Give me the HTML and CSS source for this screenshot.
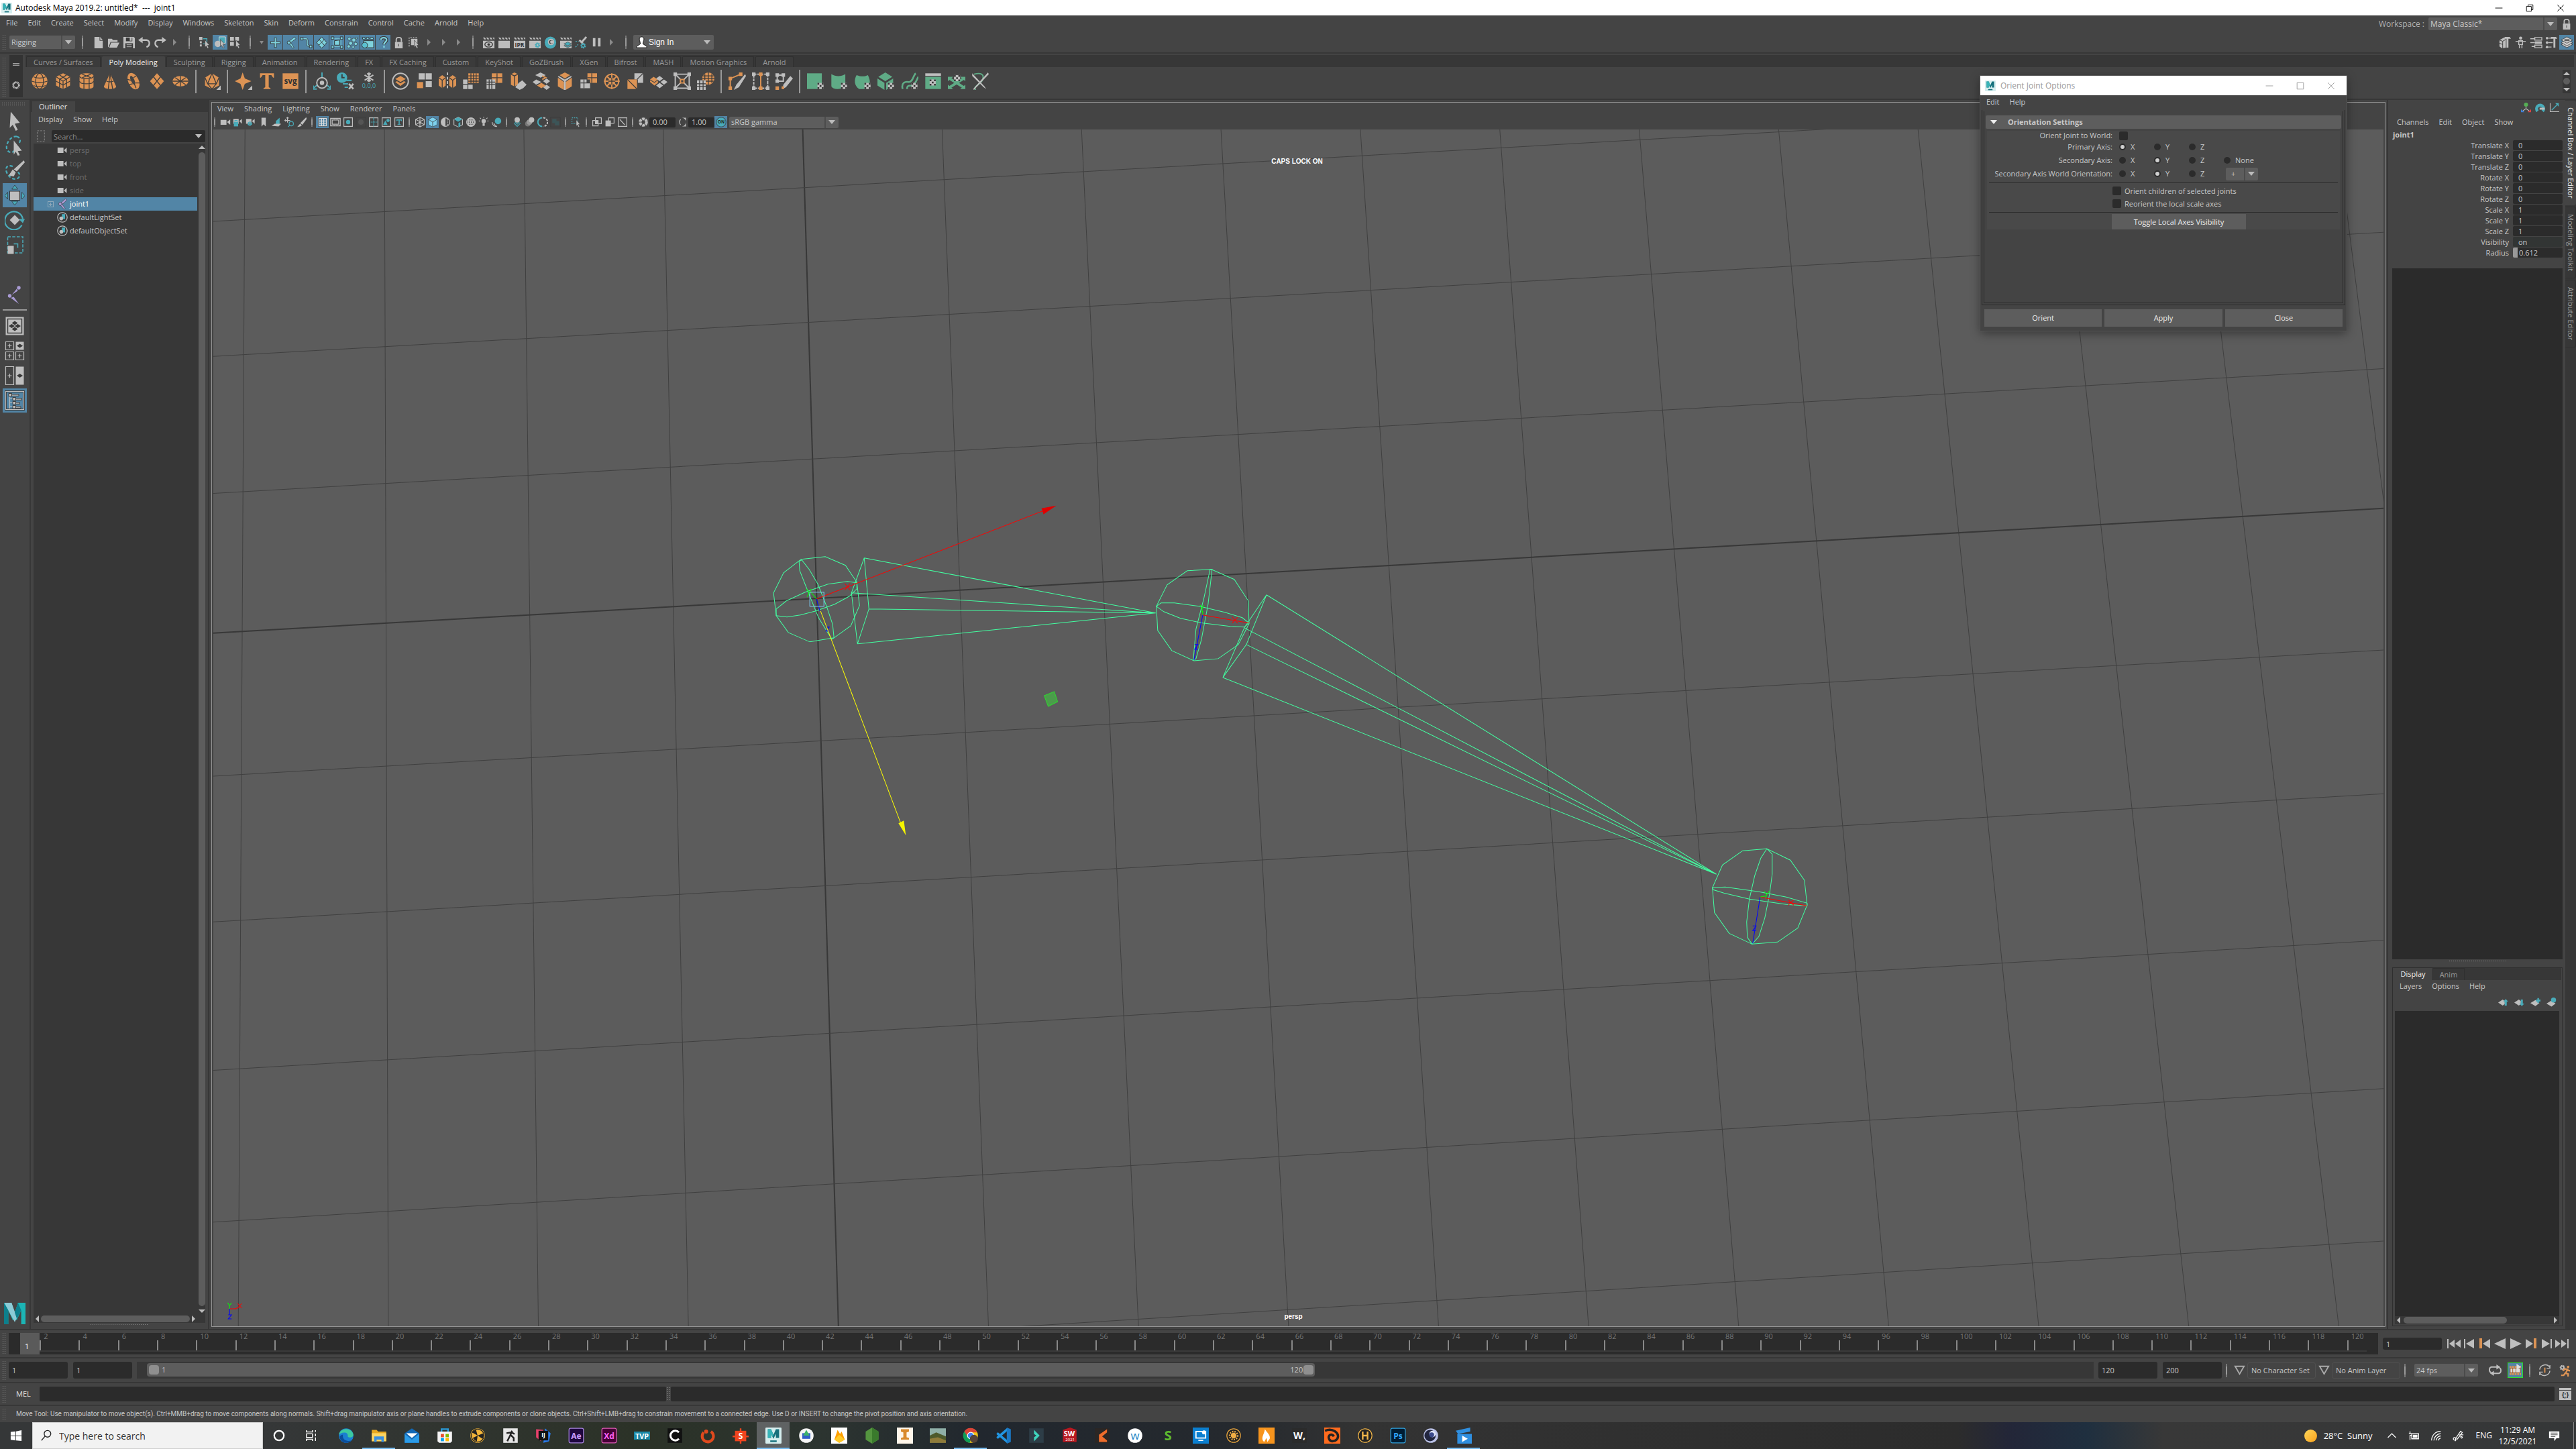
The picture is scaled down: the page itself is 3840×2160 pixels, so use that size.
FILE: index.html
```html
<!DOCTYPE html>
<html lang="en">
<head>
    <meta charset="UTF-8">
    <meta name="viewport" content="width=device-width, initial-scale=1.0">
    <title>Autodesk Maya 2019.2: untitled*</title>
    <link rel="stylesheet" href="styles.css">
</head>
<body>
    <header class="titlebar">
        <span class="app-icon" data-icon="maya"></span>
        <span class="title-text">Autodesk Maya 2019.2: untitled*&nbsp; ---&nbsp; joint1</span>
        <div class="win-buttons" data-tools="min restore close"></div>
    </header>

    <div class="menubar">
        <nav class="menu">
            <a href="#">File</a><a href="#">Edit</a><a href="#">Create</a><a href="#">Select</a><a href="#">Modify</a><a href="#">Display</a><a href="#">Windows</a><a href="#">Skeleton</a><a href="#">Skin</a><a href="#">Deform</a><a href="#">Constrain</a><a href="#">Control</a><a href="#">Cache</a><a href="#">Arnold</a><a href="#">Help</a>
        </nav>
        <label class="workspace-label" for="workspace">Workspace :</label>
        <div class="combo workspace"><select id="workspace"><option>Maya Classic*</option></select></div>
        <button class="lock-button" data-icon="lock" aria-label="Lock workspace"></button>
    </div>

    <div class="statusline">
        <span class="grip"></span>
        <div class="combo menuset"><select aria-label="Menu set"><option>Rigging</option></select></div>
        <div class="tools" data-tools="| file open save undo redo > | selHier selObj* selComp | v plus* joint* curve* surf* deform* dyn* render* help* lock selHi > > > | clapEye clap ipr clapGear ring clapLayers lightGear pause > |"></div>
        <div class="combo signin">
            <span data-icon="person"></span>
            <select aria-label="Account"><option>Sign In</option></select>
        </div>
        <div class="tools right-tools" data-tools="modelKit human attrEd toolSet chanBox*"></div>
    </div>

    <div class="shelf">
        <span class="grip"></span>
        <div class="shelf-side"><i class="bars"></i><span data-icon="gear"></span></div>
        <div class="shelf-body">
            <div class="shelf-tabs">
                <button>Curves / Surfaces</button><button class="active">Poly Modeling</button><button>Sculpting</button><button>Rigging</button><button>Animation</button><button>Rendering</button><button>FX</button><button>FX Caching</button><button>Custom</button><button>KeyShot</button><button>GoZBrush</button><button>XGen</button><button>Bifrost</button><button>MASH</button><button>Motion Graphics</button><button>Arnold</button>
            </div>
            <div class="shelf-row">
                <div class="shelf-tools" data-tools="sphere cube cylinder cone torus plane disc | platonic | star type svgIcon | pivot history freeze | combine separate mirror smooth reduce remesh boolean bevelA bevelB bridge wheel fill multi target | penCut loopCut quad | uvPlane uvCyl uvSph uvCube uvCam uvEd unfold sew"></div>
                <div class="shelf-scroll"><i class="tri up"></i><i class="dot"></i><i class="tri down"></i></div>
            </div>
        </div>
    </div>

    <main class="workarea">
        <aside class="toolbox">
            <span class="grip flat"></span>
            <div class="tool-stack" data-tools="arrow lasso paint move* rotate scale"></div>
            <div class="tool-stack last-tool" data-tools="jointTool"></div>
            <hr>
            <div class="tool-stack" data-tools="laySingle layFour layTwo layOut*"></div>
            <span class="maya-logo" data-icon="mayaBig"></span>
        </aside>

        <section class="outliner">
            <div class="panel-tab">Outliner</div>
            <nav class="menu"><a href="#">Display</a><a href="#">Show</a><a href="#">Help</a></nav>
            <div class="search-row">
                <span data-icon="frame"></span>
                <div class="combo search"><input type="text" placeholder="Search..." aria-label="Search outliner"></div>
            </div>
            <div class="tree-wrap">
                <ul class="tree">
                    <li class="dim"><span data-icon="cam"></span>persp</li>
                    <li class="dim"><span data-icon="cam"></span>top</li>
                    <li class="dim"><span data-icon="cam"></span>front</li>
                    <li class="dim"><span data-icon="cam"></span>side</li>
                    <li class="selected"><i class="expand"></i><span data-icon="jointItem"></span>joint1</li>
                    <li><span data-icon="set"></span>defaultLightSet</li>
                    <li><span data-icon="set"></span>defaultObjectSet</li>
                </ul>
                <div class="vscroll"><i class="tri up"></i><i class="thumb"></i><i class="tri down"></i></div>
            </div>
            <div class="hscroll"><i class="tri left"></i><i class="thumb"></i><i class="tri right"></i></div>
            <span class="dots"></span>
        </section>

        <section class="view-panel">
            <nav class="menu"><a href="#">View</a><a href="#">Shading</a><a href="#">Lighting</a><a href="#">Show</a><a href="#">Renderer</a><a href="#">Panels</a></nav>
            <div class="view-tools">
                <div class="tools" data-tools="| vcam camLock camGear bookmark imgPlane panZoom pencil | grid* film gate mask fieldChart safeA safeT | wire shaded* halfShade texCube checker bulb shadow | ao blur half greyBox | isoSel | xray1 xray2 xray3 | aperture"></div>
                <input type="text" value="0.00" aria-label="Exposure">
                <div class="tools" data-tools="gamma"></div>
                <input type="text" value="1.00" aria-label="Gamma">
                <div class="tools" data-tools="on*"></div>
                <div class="combo colorspace"><select aria-label="View transform"><option>sRGB gamma</option></select></div>
            </div>
            <div class="viewport">
                <svg id="scene" viewBox="318 193 3235 1782" preserveAspectRatio="xMidYMid slice">
                    <g id="grid"></g>
                    <g class="bone">
                        <path d="M1195 833L1231 829L1261 842L1278 867L1282 902L1269 932L1244 950L1208 956L1176 942L1158 917L1154 883L1169 853Z"/>
                        <path d="M1158 907L1173 895L1201 882L1235 870L1264 866L1278 868L1278 877L1267 888L1245 900L1217 910L1194 916L1174 919L1158 917Z"/>
                        <path d="M1192 836L1193 850L1206 883L1221 920L1235 943L1241 952L1244 950L1242 930L1233 903L1220 870L1207 848L1196 834Z"/>
                        <path d="M1289 831L1296 907L1279 959L1270 883ZM1289 831L1723 913L1296 907M1279 959L1723 913L1270 883"/>
                        <path d="M1770 850L1806 848L1840 863L1861 895L1862 929L1846 960L1816 981L1780 984L1747 969L1726 939L1724 903L1740 871Z"/>
                        <path d="M1724 903L1731 898L1751 898L1788 903L1826 912L1852 920L1862 928L1855 934L1834 933L1793 928L1760 921L1735 911Z"/>
                        <path d="M1804 848L1795 890L1783 937L1779 983L1783 981L1791 953L1801 900L1807 848Z"/>
                        <path d="M1888 886L1858 960L1823 1009L1855 935ZM1888 886L2558 1302L1858 960M1823 1009L2558 1302L1855 935"/>
                        <path d="M2597 1267L2633 1264L2668 1281L2689 1311L2693 1348L2679 1382L2649 1403L2611 1406L2577 1390L2555 1359L2552 1322L2567 1288Z"/>
                        <path d="M2552 1322L2571 1321L2621 1328L2662 1336L2693 1345L2693 1349L2662 1347L2607 1339L2569 1330L2553 1325Z"/>
                        <path d="M2633 1264L2624 1278L2615 1304L2607 1339L2603 1373L2604 1396L2611 1406L2621 1395L2630 1367L2637 1332L2641 1302L2641 1272Z"/>
                    </g>
                    <g class="axis-x">
                        <path d="M1218 892L1555 761M1260 869l8 10m0-10l-8 10M1793 916L1862 928M1837 919l8 9m0-9l-8 9M2623 1336L2693 1349M2665 1340l8 8m0-8l-8 8M344 1949h9l6-3M356 1941l6 7m0-7l-6 7"/>
                        <path class="head-x" d="M1553 757L1575 753L1556 766Z"/>
                    </g>
                    <path class="axis-y" d="M1218 892L1208 880M1203 877l4 6l3-6m-3 6l-3 6M1793 916v-6M1789 901l3 6l3-6m-3 6v5M2623 1336l10-2M2629 1327l4 5l4-5m-4 5l-2 6M344 1949v-6M341 1940l3 4l3-4"/>
                    <path class="axis-z" d="M1218 892L1223 910M1232 934h5l-5 6h5M1793 916L1780 983M1781 960h5l-5 7h5M2623 1336L2612 1405M2612 1379h5l-5 7h5M344 1949v9M342 1958h5l-5 6h5"/>
                    <path class="axis-sel" d="M1224 910L1343 1225"/>
                    <path class="head-sel" d="M1340 1226L1348 1222L1351 1244Z"/>
                    <path class="plane-handle" d="M1572 1030L1557 1036L1563 1052L1577 1045Z"/>
                    <rect class="center-handle" x="1208" y="882" width="21" height="21"/>
                </svg>
                <span class="hud hud-top">CAPS LOCK ON</span>
                <span class="hud hud-bottom">persp</span>
            </div>
        </section>

        <section class="channelbox">
            <div class="tools chan-icons" data-tools="manip speed hyper"></div>
            <nav class="menu"><a href="#">Channels</a><a href="#">Edit</a><a href="#">Object</a><a href="#">Show</a></nav>
            <h2>joint1</h2>
            <div id="channels"></div>
            <div class="history"></div>
            <span class="dots"></span>
            <div class="layers">
                <div class="layer-tabs"><button class="active">Display</button><button>Anim</button></div>
                <nav class="menu"><a href="#">Layers</a><a href="#">Options</a><a href="#">Help</a></nav>
                <div class="tools layer-icons" data-tools="layUp layDown layAdd laySel"></div>
                <div class="layer-list"></div>
                <div class="hscroll"><i class="tri left"></i><i class="thumb"></i><i class="tri right"></i></div>
            </div>
        </section>

        <div class="side-tabs">
            <button class="active">Channel Box / Layer Editor</button>
            <button>Modeling Toolkit</button>
            <button>Attribute Editor</button>
        </div>
    </main>

    <div class="timeline">
        <span class="grip"></span>
        <div class="track" id="track"></div>
        <input type="text" class="field" value="1" aria-label="Current frame">
        <div class="tools" data-tools="toStart stepBack keyBack playBack play keyFwd stepFwd toEnd"></div>
    </div>

    <div class="range">
        <span class="grip"></span>
        <input type="text" class="field" value="1" aria-label="Animation start">
        <input type="text" class="field" value="1" aria-label="Playback start">
        <div class="range-track">
            <div class="range-thumb"><i></i><span>1</span><span class="range-end">120</span><i></i></div>
        </div>
        <input type="text" class="field" value="120" aria-label="Playback end">
        <input type="text" class="field" value="200" aria-label="Animation end">
        <i class="sep"></i>
        <button class="outline-tri" data-icon="triOut" aria-label="Character sets"></button>
        <button class="set-button">No Character Set</button>
        <button class="outline-tri" data-icon="triOut" aria-label="Anim layers"></button>
        <button class="set-button">No Anim Layer</button>
        <i class="sep"></i>
        <div class="combo fps"><select aria-label="Frame rate"><option>24 fps</option></select></div>
        <div class="tools" data-tools="loop cache* | autoKey prefs"></div>
    </div>

    <div class="command">
        <span class="grip"></span>
        <label for="mel">MEL</label>
        <input type="text" id="mel">
        <span class="grip"></span>
        <input type="text" class="result" aria-label="Result" readonly>
        <button data-icon="script" aria-label="Script editor"></button>
    </div>

    <div class="helpline">
        <span class="grip"></span>
        <p>Move Tool: Use manipulator to move object(s). Ctrl+MMB+drag to move components along normals. Shift+drag manipulator axis or plane handles to extrude components or clone objects. Ctrl+Shift+LMB+drag to constrain movement to a connected edge. Use D or INSERT to change the pivot position and axis orientation.</p>
    </div>

    <footer class="taskbar">
        <button class="start" data-icon="windows" aria-label="Start"></button>
        <div class="task-search"><span data-icon="magnifier"></span><input type="text" placeholder="Type here to search" aria-label="Type here to search"></div>
        <div class="task-sys" data-tools="cortana taskView"></div>
        <div class="task-apps" data-tools="edge explorer+ mail store nuke zbrush idea ae xd tvp cinema marmo substance maya* affinity firebase node inventor photo chrome+ vscode filmora sw arrowApp wacom camtasia pcApp sunApp flame wApp houdini hApp ps c4d movies+"></div>
        <div class="tray">
            <i class="sun"></i>
            <span class="weather">28°C&nbsp; Sunny</span>
            <div class="tray-icons" data-tools="caret battery wifi pen"></div>
            <span>ENG</span>
            <span class="clock">11:29 AM<br>12/5/2021</span>
            <div class="tray-icons notify" data-tools="note"></div>
        </div>
    </footer>

    <form class="dialog">
        <div class="dialog-title">
            <span data-icon="maya"></span>
            <span class="dialog-name">Orient Joint Options</span>
            <div class="win-buttons" data-tools="min square close"></div>
        </div>
        <nav class="menu"><a href="#">Edit</a><a href="#">Help</a></nav>
        <div class="dialog-frame">
            <div class="dialog-inner">
                <h3><i class="tri down"></i>Orientation Settings</h3>
                <div class="settings">
                    <div class="row"><label class="name" for="world">Orient Joint to World:</label><input type="checkbox" id="world"></div>
                    <div class="row">
                        <span class="name">Primary Axis:</span>
                        <label><input type="radio" name="p" checked>X</label><label><input type="radio" name="p">Y</label><label><input type="radio" name="p">Z</label>
                    </div>
                    <div class="row">
                        <span class="name">Secondary Axis:</span>
                        <label><input type="radio" name="s">X</label><label><input type="radio" name="s" checked>Y</label><label><input type="radio" name="s">Z</label><label><input type="radio" name="s">None</label>
                    </div>
                    <div class="row">
                        <span class="name">Secondary Axis World Orientation:</span>
                        <label><input type="radio" name="w">X</label><label><input type="radio" name="w" checked>Y</label><label><input type="radio" name="w">Z</label>
                        <div class="combo sign"><select aria-label="Direction"><option>+</option></select></div>
                    </div>
                    <hr>
                    <label class="check"><input type="checkbox">Orient children of selected joints</label>
                    <label class="check"><input type="checkbox">Reorient the local scale axes</label>
                    <hr>
                    <button type="button" class="toggle">Toggle Local Axes Visibility</button>
                </div>
            </div>
        </div>
        <div class="dialog-buttons">
            <button type="button">Orient</button>
            <button type="button">Apply</button>
            <button type="button">Close</button>
        </div>
    </form>

    <script src="script.js"></script>
</body>
</html>
```
FILE: styles.css
```css
* { box-sizing: border-box; }
body {
    margin: 0;
    min-height: 100vh;
    display: flex;
    flex-direction: column;
    position: relative;
    background: #444;
    color: #c8c8c8;
    font-family: "Open Sans", "Noto Sans", sans-serif;
    font-size: 11px;
    line-height: 16px;
}
button, input, select {
    font: inherit;
    color: inherit;
    background: none;
    border: none;
    padding: 0;
    margin: 0;
    min-width: 0;
    border-radius: 0;
    appearance: none;
}
button { display: flex; align-items: center; justify-content: center; }
svg { display: block; flex: none; }
a { color: inherit; text-decoration: none; }
hr { border: none; margin: 0; }
[data-icon] { display: flex; align-items: center; justify-content: center; }
[data-icon] svg { width: 18px; height: 18px; }

/* icon colours */
.g { fill: #bebebe; }
.t { fill: #49abb9; }
.o { fill: #dc9354; }
.e { fill: #5fab86; }
.v { fill: #a99bd4; }
.d { fill: #383838; }
.w { fill: #fff; }
.gs, .ts, .os, .es, .ds, .ws { fill: none; stroke-width: 1.5; }
.gs { stroke: #bebebe; }
.ts { stroke: #49abb9; }
.os { stroke: #dc9354; }
.es { stroke: #5fab86; }
.ds { stroke: #3c3c3c; stroke-width: 1; }
.ws { stroke: #fff; }

/* shared bits */
.menu { display: flex; }
.grip {
    flex: none;
    width: 5px;
    margin: 3px 5px 3px 3px;
    align-self: stretch;
    background: radial-gradient(circle, #8a8a8a 25%, transparent 35%) 0 0 / 3px 3px;
}
.grip.flat { width: 36px; height: 5px; margin: 3px 0 0 2px; align-self: auto; }
.dots { flex: none; height: 3px; width: 86px; margin: 1px auto; background: radial-gradient(circle, #8a8a8a 25%, transparent 35%) 0 0 / 3px 3px; }
.tools { display: flex; align-items: center; }
.tools button.on, .tool-stack button.on { background: #5285a6; }
.sep { flex: none; width: 2px; height: 20px; margin: 0 10px; background: linear-gradient(#777 20%, #999 20%, #999 80%, #777 80%); }
.more { flex: none; width: 22px; height: 20px; display: flex; align-items: center; justify-content: center; }
.more::before { content: ""; border: 5px solid transparent; border-left: 5px solid #8a8a8a; border-right: 0; }
.tri { flex: none; border: 5px solid transparent; }
.tri.up { border-bottom-color: #bbb; border-top: 0; }
.tri.down { border-top-color: #bbb; border-bottom: 0; }
.tri.left { border-right-color: #bbb; border-left: 0; }
.tri.right { border-left-color: #bbb; border-right: 0; }
.combo { position: relative; display: flex; align-items: center; background: #5d5d5d; border-radius: 2px; }
.combo select, .combo input { flex: 1; height: 100%; padding: 0 24px 0 3px; }
.combo::before { content: ""; position: absolute; right: 19px; top: 0; bottom: 0; width: 2px; background: #4b4b4b; }
.combo::after { content: ""; position: absolute; right: 5px; top: calc(50% - 3px); border: 5px solid transparent; border-top: 6px solid #bbb; border-bottom: 0; }
.hscroll { flex: none; display: flex; align-items: center; height: 12px; padding: 0 3px; }
.hscroll .thumb { height: 10px; border-radius: 5px; background: #5d5d5d; }

/* top bars */
.titlebar { display: flex; height: 23px; background: #fff; color: #000; align-items: center; font-size: 12px; }
.titlebar .app-icon { width: 20px; margin-right: 3px; }
.app-icon svg { width: 16px; height: 16px; }
.win-buttons { display: flex; margin-left: auto; }
.win-buttons button { width: 46px; height: 22px; }
.win-buttons svg { width: 12px; height: 12px; }
.menubar { display: flex; height: 25px; align-items: center; }
.menubar .menu { padding: 0 0 4px 9px; gap: 15px; margin-right: auto; }
.workspace-label { margin-right: 6px; font-size: 12px; color: #b0b0b0; }
.workspace { width: 192px; height: 19px; font-size: 12px; }
.lock-button { width: 28px; }
.statusline { display: flex; height: 30px; align-items: center; }
.statusline .grip { margin-right: 6px; }
.menuset { width: 98px; height: 20px; }
.statusline .tools button { width: 23px; height: 22px; border-left: 1px solid #444; }
.statusline svg { width: 19px; height: 19px; }
.mini-down { width: 14px; display: flex; justify-content: center; }
.mini-down::before { content: ""; border: 3px solid transparent; border-top: 5px solid #8a8a8a; border-bottom: 0; margin-right: 2px; }
.signin { width: 120px; height: 22px; font-family: "Liberation Sans", sans-serif; font-size: 12px; color: #fff; }
.signin::before { display: none; }
.signin span { width: 22px; padding-left: 2px; }
.signin select { padding-left: 1px; }
.right-tools { margin-left: auto; padding-right: 3px; }

/* shelf */
.shelf { display: flex; height: 71px; border-top: 2px solid #373737; border-bottom: 2px solid #373737; padding-top: 2px; }
.shelf .grip { margin-right: 6px; }
.shelf-side { width: 20px; margin-right: 4px; height: 63px; background: #333; display: flex; flex-direction: column; align-items: center; padding-top: 12px; gap: 22px; }
.shelf-side svg { width: 14px; height: 14px; }
.bars { width: 10px; height: 4px; border-top: 2px solid #999; border-bottom: 1px solid #999; }
.shelf-body { flex: 1; }
.shelf-tabs { display: flex; height: 18px; gap: 2px; background: #373737; margin-right: 3px; padding-left: 1px; }
.shelf-tabs button { height: 16px; margin-top: 2px; padding: 0 10px; background: #3b3b3b; border: 1px solid #2f2f2f; border-bottom: 0; border-radius: 2px 2px 0 0; color: #999; }
.shelf-tabs button.active { background: #444; color: #eee; border-color: #444; }
.shelf-row { display: flex; justify-content: space-between; align-items: center; height: 42px; }
.shelf-tools { display: flex; align-items: center; padding-left: 3px; }
.shelf-tools button { width: 35px; height: 36px; }
.shelf-tools svg { width: 26px; height: 26px; }
.shelf-tools .sep { height: 35px; margin: 0 5px; background: #999; }
.shelf-scroll { width: 12px; height: 35px; margin-right: 8px; background: #373737; display: flex; flex-direction: column; align-items: center; justify-content: space-between; padding: 3px 0; }
.shelf-scroll .dot { width: 10px; height: 10px; border-radius: 5px; background: #5d5d5d; }

/* main area */
.workarea { flex: 1; display: flex; min-height: 0; }
.toolbox { width: 46px; border-right: 2px solid #373737; display: flex; flex-direction: column; padding-left: 0; }
.toolbox hr { width: 36px; height: 2px; margin: 5px 4px 5px; background: #999; }
.tool-stack { display: flex; flex-direction: column; gap: 1px; padding: 0 4px; }
.grip + .tool-stack { margin-top: 5px; }
.tool-stack button { width: 36px; height: 36px; }
.tool-stack svg { width: 30px; height: 30px; }
.last-tool { margin-top: 37px; }
.maya-logo { margin: auto 6px 7px; }
.maya-logo svg { width: 32px; height: 32px; }

.outliner { width: 266px; display: flex; flex-direction: column; padding: 2px 4px 4px 2px; border-right: 2px solid #373737; background: linear-gradient(#383838 18px, #444 18px); }
.outliner .panel-tab { width: 64px; height: 16px; padding-left: 10px; color: #e4e4e4; background: #444; }
.outliner .menu { padding: 3px 0 8px 9px; gap: 15px; }
.search-row { display: flex; height: 18px; }
.search-row span { width: 29px; padding-right: 3px; }
.combo.search { flex: 1; background: #2b2b2b; }
.combo.search::before { display: none; }
.tree-wrap { flex: 1; display: flex; margin: 2px 0 0 2px; background: #373737; }
.tree { flex: 1; list-style: none; margin: 0; padding: 0; }
.tree li { height: 20px; margin-right: 2px; padding-left: 35px; display: flex; align-items: center; gap: 3px; }
.tree li svg { width: 16px; height: 16px; }
.dim { color: #6e6e6e; }
.tree .selected { background: #5285a6; color: #fff; padding-left: 21px; }
.expand { width: 9px; height: 9px; margin-right: 2px; border: 1px solid #8fa9ba; background: linear-gradient(#8fa9ba, #8fa9ba) center / 5px 1px no-repeat, linear-gradient(#8fa9ba, #8fa9ba) center / 1px 5px no-repeat; }
.vscroll { width: 10px; display: flex; flex-direction: column; align-items: center; gap: 5px; padding: 3px 0; }
.vscroll .thumb { flex: 1; width: 10px; border-radius: 5px; background: #5d5d5d; }
.outliner .hscroll { background: #373737; margin-left: 2px; padding-right: 15px; }
.outliner .hscroll .thumb { flex: 1; margin: 0 3px; }

.view-panel { flex: 1; display: flex; flex-direction: column; margin: 3px 2px 3px 3px; border: 1px solid #939393; padding: 0 2px; min-width: 0; }
.view-panel .menu { height: 18px; padding: 1px 0 0 6px; gap: 16px; }
.view-tools { display: flex; align-items: center; height: 22px; }
.view-tools .tools button { width: 19px; height: 18px; }
.view-tools svg { width: 16px; height: 16px; }
.view-tools .sep { height: 14px; margin: 0 5px; }
.view-tools .sep:first-child { margin-left: 1px; }
.view-tools input { width: 39px; height: 15px; padding-left: 5px; background: #2b2b2b; border-radius: 2px; }
.colorspace { width: 163px; height: 17px; margin-left: 3px; }
.viewport { flex: 1; position: relative; background: #5c5c5c; min-height: 0; overflow: hidden; }
#scene { position: absolute; width: 100%; height: 100%; }
#grid line { stroke: #404040; stroke-width: 1; }
#grid .main-axis { stroke: #383838; stroke-width: 2; }
.bone { fill: none; stroke: #42ffa1; stroke-width: 1; }
.axis-x, .axis-y, .axis-z, .axis-sel { fill: none; stroke-width: 1; }
.axis-x { stroke: #f00; }
.head-x { fill: #e00000; stroke: none; }
.axis-y { stroke: #0f0; }
.axis-z { stroke: #00f; }
.axis-sel { stroke: #ff0; }
.head-sel { fill: #f4f400; }
.plane-handle { fill: #4b9c4b; stroke: #2fd82f; }
.center-handle { fill: none; stroke: #7fd4ff; stroke-width: 1; }
.hud { position: absolute; left: 0; right: 4px; text-align: center; color: #fff; font: bold 10px/12px "Liberation Sans", sans-serif; }
.hud-top { top: 42px; }
.hud-bottom { bottom: 8px; right: 15px; }

.channelbox { width: 266px; border-left: 2px solid #373737; display: flex; flex-direction: column; padding: 1px 4px 4px 6px; }
.chan-icons { justify-content: flex-end; height: 20px; }
.chan-icons button { width: 21px; }
.chan-icons svg { width: 15px; height: 15px; }
.chan-icons button:last-child { margin-right: 2px; }
.channelbox .menu { height: 24px; padding: 4px 0 0 7px; gap: 15px; }
.channelbox h2 { margin: 0; font-size: 11px; line-height: 14px; padding: 0 1px 1px; }
#channels label { display: grid; grid-template-columns: 1fr 74px; column-gap: 6px; height: 16px; text-align: right; }
#channels input { height: 15px; padding-left: 8px; background: #2b2b2b; border-radius: 2px; }
#channels .keyable-off { background: #323534; }
#channels .slider { border-left: 7px solid #999; padding-left: 2px; }
.history { flex: 1032 1 0; margin-top: 15px; background: #2b2b2b; }
.layers { flex: 532 1 0; margin-top: 7px; padding: 0 4px 2px 3px; border: 1px solid #2f2f2f; display: flex; flex-direction: column; }
.layer-tabs { display: flex; height: 18px; background: #373737; margin-right: -3px; margin-left: -2px; }
.layer-tabs button { width: 58px; color: #999; }
.layer-tabs button.active { background: #444; color: #eee; }
.layer-tabs button:last-child { width: 48px; border: 1px solid #2f2f2f; border-bottom: 0; }
.channelbox .layers .menu { height: 20px; padding: 1px 0 0 7px; }
.layer-icons { justify-content: flex-end; height: 26px; }
.layer-icons button { width: 24px; }
.layer-icons svg { width: 15px; height: 15px; }
.layer-list { flex: 1; background: #2b2b2b; }
.layers .hscroll { background: #373737; }
.layers .hscroll .thumb { width: 154px; margin: 0 auto 0 5px; }
.side-tabs { width: 16px; background: #373737; padding-top: 1px; display: flex; flex-direction: column; gap: 2px; }
.side-tabs button { writing-mode: vertical-rl; width: 16px; padding: 10px 0; color: #999; border: 1px solid #2f2f2f; border-left: 0; border-radius: 0 3px 3px 0; }
.side-tabs .active { color: #eee; background: #444; border: none; }

/* bottom bars */
.timeline, .range, .command, .helpline { display: flex; flex: none; align-items: center; border-top: 2px solid #373737; }
.timeline { height: 42px; }
.timeline .tools button { width: 23px; height: 24px; }
.timeline .tools { padding: 0 10px 0 6px; }
.timeline svg { width: 20px; height: 20px; }
.track { flex: 1; height: 32px; padding: 0 17px 0 17px; display: flex; background: #2b2b2b; margin-right: 7px; }
.track div { flex: 2 1 0; min-width: 0; text-indent: 6px; height: 28px; line-height: 10px; color: #757575; border-bottom: 2px solid #3a3a3a; background: linear-gradient(#888, #888) 0 100% / 2px 15px no-repeat; }
.track div:first-child { flex: 1 1 0; height: 32px; background: #5a5a5a; color: #fff; border: 0; line-height: 40px; text-indent: 7px; }
.track div:last-child { flex: 1 1 0; }
.field { width: 88px; height: 25px; padding-left: 5px; background: #2b2b2b; border-radius: 3px; }
.timeline .field { height: 18px; }
.range { height: 37px; }
.range .grip, .timeline .grip { margin-right: 5px; }
.range .field + .field { margin-left: 8px; }
.range-track { flex: 1; height: 25px; margin: 0 7px; padding: 2px 0 3px 15px; background: #373737; }
.range-thumb { width: 60%; height: 20px; padding: 0 2px 0 3px; border-radius: 4px; background: #5d5d5d; display: flex; align-items: center; }
.range-thumb i { width: 15px; height: 14px; border-radius: 4px; background: #8f8f8f; }
.range-thumb span { margin-left: 4px; }
.range-thumb .range-end { margin: 0 1px 0 auto; }
.range > .sep { margin: 0 6px; }
.outline-tri { width: 24px; }
.outline-tri + .set-button { width: 102px; }
.outline-tri svg { width: 10px; height: 10px; }
.set-button { height: 24px; border: 1px solid #505050; border-radius: 3px; justify-content: flex-start; padding-left: 5px; }
.fps { width: 95px; height: 19px; margin: 0 14px 0 7px; }
.range .tools button { width: 23px; height: 23px; margin-right: 7px; }
.range .tools .on { border: 1px solid #2be02b; }
.range .tools .sep { margin: 0 10px 0 2px; }
.range .tools button:last-child { margin-right: 5px; }
.range svg { width: 19px; height: 19px; }
.command { height: 34px; }
.command label { width: 46px; padding-left: 11px; color: #e0e0e0; }
.command input { flex: 934; height: 22px; background: #2b2b2b; border-radius: 2px; }
.command input.result { flex: 2807; }
.command .grip { margin-right: 5px; }
.command input + .grip { margin: 5px 1px; }
.command button { width: 32px; }
.command svg { width: 22px; height: 20px; }
.helpline { height: 26px; font-family: Roboto, sans-serif; font-size: 10px; }
.helpline p { margin: 0 0 0 11px; }

/* taskbar */
.taskbar { flex: none; display: flex; height: 40px; color: #fff; font-size: 12px; background: linear-gradient(90deg, #353738 10%, #2b3227 25%, #2c3430 32%, #21272e 38%, #25292e 48%, #333 53%, #2c2c2c 76%, #232638 78%, #1f2f3f 81%, #383838 84%, #353738); }
.start { width: 48px; }
.task-search { width: 344px; display: flex; align-items: center; background: #f2f2f2; border: 1px solid #cfcfcf; }
.task-search span { width: 39px; }
.task-search input { flex: 1; height: 36px; font-size: 14px; color: #444; }
.task-search input::placeholder { color: #333; opacity: 1; }
.combo.search input::placeholder { color: #8a8a8a; opacity: 1; }
.task-sys, .task-apps, .tray-icons { display: flex; }
.task-sys button { width: 48px; height: 40px; }
.task-sys svg { width: 18px; height: 18px; }
.task-apps { padding-left: 3px; }
.task-apps button { width: 49px; height: 40px; }
.task-apps svg { width: 24px; height: 24px; }
.task-apps .run { box-shadow: inset 0 -2px #76b9ed; }
.task-apps .on { background: #5f6263; box-shadow: inset 0 -2px #76b9ed; }
.tray { display: flex; align-items: center; margin-left: auto; margin-right: 3px; padding-right: 12px; border-right: 1px solid #888; }
.sun { width: 19px; height: 19px; border-radius: 50%; margin-right: 10px; background: linear-gradient(135deg, #ffd75a, #f9a11b); }
.weather { margin-right: 12px; font-size: 13px; }
.tray-icons button { width: 33px; height: 40px; }
.tray-icons svg { width: 17px; height: 17px; }
.tray-icons + span { margin-left: 10px; }
.clock { width: 76px; text-align: center; line-height: 17px; }

/* orient joint options */
.dialog { position: absolute; top: 113px; right: 342px; width: 546px; background: #444; box-shadow: 0 0 0 1px #555, 0 4px 14px #0006; display: flex; flex-direction: column; }
.dialog-title { height: 29px; background: #fff; color: #999; display: flex; align-items: center; font-size: 12px; }
.dialog-title > span:first-child { width: 30px; }
.dialog-title svg { width: 16px; height: 16px; }
.dialog-title .win-buttons svg { width: 12px; height: 12px; }
.dialog > .menu { padding: 2px 9px 0; gap: 15px; height: 22px; }
.dialog-frame { margin: 0 2px; border: 1px solid #2b2b2b; border-top: 0; padding: 2px; }
.dialog-inner { border: 1px solid #2b2b2b; border-top: 0; padding: 6px 2px 5px; height: 286px; }
.dialog h3 { margin: 0 0 3px; height: 20px; background: #5d5d5d; border-radius: 2px; font-size: 11px; display: flex; align-items: center; gap: 16px; padding-left: 7px; }
.dialog h3 .tri { border-top-color: #eee; border-top-width: 6px; }
.settings { background: #494949; margin: 0 2px; padding: 0 3px; display: flex; flex-direction: column; }
.row { display: flex; align-items: center; height: 20px; }
.row:first-child { height: 14px; }
.row .name { width: 184px; text-align: right; margin-right: 10px; }
.row label:not(.name) { display: flex; align-items: center; width: 52px; gap: 7px; }
.row label:not(.name):nth-of-type(4) { width: 60px; }
input[type="checkbox"] { width: 13px; height: 13px; background: #2b2b2b; border-radius: 2px; }
input[type="radio"] { width: 10px; height: 10px; border-radius: 5px; background: #2b2b2b; }
input[type="radio"]:checked { background: #d0d0d0; border: 2px solid #2b2b2b; }
.sign { width: 48px; height: 19px; margin-left: 3px; }
.sign select { padding-left: 8px; }
.settings hr { height: 1px; background: #2b2b2b; margin: 3px 0 2px; }
.check { display: flex; align-items: center; height: 19px; gap: 5px; margin-left: 184px; }
.toggle { width: 200px; height: 23px; margin-left: 183px; background: #5d5d5d; color: #eee; }
.dialog-buttons { display: flex; gap: 4px; padding: 6px 6px; }
.dialog-buttons button { flex: 1; height: 26px; background: #5d5d5d; color: #eee; }
```
FILE: script.js
```js
// icon artwork, all on a 20x20 box
const chk = (x, y) => `<path class="g" d="M${x} ${y}h7v7h-7z"/><path class="d" d="M${x} ${y}h2v2h-2zm5 0h2v2h-2zm-2.500 2.500h2v2h-2zm-2.500 2.500h2v2h-2zm5 0h2v2h-2z"/>`;
const gearAt = (x, y, c) => `<circle class="${c}s" cx="${x}" cy="${y}" r="3" stroke-dasharray="2 1" style="stroke-width:2.500"/><circle class="${c}s" cx="${x}" cy="${y}" r="2.200"/>`;
const clapBase = '<path class="g" d="M1 7h18v12H1zM1 2h3l2 3H3zm5 0h3l2 3H8zm5 0h3l2 3h-3zm5 0h3v3h-1z"/>';
const camBase = '<path class="g" d="M1 4h10v9H1zM12 8l5-4v9z"/>';
const letters = (bg, fg, txt, border) => `<rect x="1" y="1" width="18" height="18" rx="2" fill="${bg}" stroke="${border || bg}"/><text x="10" y="14" font-size="10" font-weight="bold" text-anchor="middle" fill="${fg}" font-family="Open Sans, sans-serif">${txt}</text>`;
const ball = (bg, inner) => `<circle cx="10" cy="10" r="9" fill="${bg}"/>${inner}`;
const pointer = (x, y) => `<path class="g" stroke="#383838" stroke-width=".6" d="M${x} ${y}l7 8-3 .3 2 4-2 1-2-4-2 2z"/>`;
const cubeLines = '<path class="ds" d="M10 10v9M10 10L2 5M10 10l8-5"/>';

const icons = {
    maya: '<rect width="20" height="20" rx="1" fill="#d5edee"/><path fill="#16707c" d="M3 2h4l3 7 3-7h4v11h-4V8l-3 6-3-6v5H3z"/><path fill="#37b4b8" d="M3 2h4l3 7-1 3-2-4v5H3z"/><path fill="#16707c" d="M6 16h8v2H6z"/>',
    mayaBig: '<path fill="#1cb5b5" d="M0 0h7l3 9 3-9h7v20h-4V7l-4 9H8L4 7v13H0z"/><path fill="#8ccbd6" d="M0 0h7l5 14-2 4z"/><path fill="#0d7f8c" d="M0 0l4 7v13H0zM13 0l-3 9 2 6 4-8z"/>',
    min: '<path fill="none" stroke="currentColor" stroke-width="1.500" d="M1 10h18"/>',
    square: '<path fill="none" stroke="currentColor" stroke-width="1.500" d="M2 2h16v16H2z"/>',
    restore: '<path fill="none" stroke="currentColor" stroke-width="1.500" d="M2 6h12v12H2zM6 6V2h12v12h-4"/>',
    close: '<path fill="none" stroke="currentColor" stroke-width="1.500" d="M2 2l16 16M18 2L2 18"/>',
    lock: '<path class="g" d="M4 9h12v10H4z"/><path class="gs" style="stroke-width:2" d="M6 9V5c0-4 8-4 8 0v4"/><path class="ds" d="M10 12v4"/>',
    file: '<path class="g" d="M4 1h8v6h5v12H4zM13 1l4 5h-4z"/>',
    open: '<path class="g" d="M1 4h6l2 2h7v3H5L2 17H1zM6 10h13l-4 8H3z"/>',
    save: '<path class="g" d="M1 1h16l2 2v16H1z"/><path class="d" d="M5 2h10v6H5zM4 11h12v8H4z"/><path class="g" d="M11 2h3v5h-3zM6 13h8v1H6zm0 3h8v1H6z"/>',
    undo: '<path class="gs" style="stroke-width:2.500" d="M5 6h8c6 1 6 9 0 11"/><path class="g" d="M7 1v10L0 6z"/>',
    redo: '<path class="gs" style="stroke-width:2.500" d="M15 6H7c-6 1-6 9 0 11"/><path class="g" d="M13 1v10l7-5z"/>',
    selHier: '<path class="g" d="M1 1h5v5H1zM2 8h3v3H2zM2 13h3v3H2z"/><path class="ts" d="M7 4h6v6M7 12h4"/>' + pointer(10, 6),
    selObj: '<path class="t" stroke="#ddd" d="M8 1h10v10H8z"/><circle class="g" cx="6" cy="12" r="5"/>' + pointer(10, 5),
    selComp: '<path class="g" d="M1 1h6v6H1zM9 1h6v6H9zM1 9h6v6H1z"/>' + pointer(10, 6),
    selHi: '<path class="gs" stroke-dasharray="2 2" d="M2 16V2h14"/><path class="g" d="M5 4h10v10H5z"/>' + pointer(10, 6),
    plus: '<path class="ds" style="stroke-width:4" d="M10 2v16M2 10h16"/><path stroke="#7ed2dd" stroke-width="2" d="M10 3v14M3 10h14"/>',
    joint: '<path fill="#7ed2dd" stroke="#333" stroke-width=".7" d="M16 1l2 3-8 6-3-2zM7 11l3-1 5 8-2 1z"/><circle fill="#7ed2dd" stroke="#333" cx="7" cy="10" r="2.500"/>',
    curve: '<path class="ds" style="stroke-width:3" d="M3 4h7c5 1-3 12 7 12"/><path fill="none" stroke="#7ed2dd" stroke-width="1.500" d="M3 4h7c5 1-3 12 7 12"/><path fill="#7ed2dd" stroke="#333" d="M1 2h4v4H1zM15 14h4v4h-4z"/>',
    surf: '<path fill="#7ed2dd" stroke="#333" d="M10 1l8 9-8 9-8-9z"/><path class="ds" d="M6 5l8 9M14 5l-8 9"/>',
    deform: '<path fill="none" stroke="#7ed2dd" d="M4 4h12v12H4z"/><path fill="#7ed2dd" stroke="#333" d="M6 7l8-1v8H6zM1 1h4v4H1zM15 1h4v4h-4zM1 15h4v4H1zM15 15h4v4h-4z"/>',
    dyn: '<g fill="#7ed2dd" stroke="#333" stroke-width=".7"><circle cx="5" cy="4" r="2.500"/><circle cx="12" cy="6" r="3"/><circle cx="7" cy="11" r="3"/><circle cx="15" cy="12" r="2.500"/><circle cx="4" cy="16" r="2.500"/><circle cx="11" cy="17" r="2"/><circle cx="16" cy="3" r="1.500"/></g>',
    render: '<path fill="#7ed2dd" stroke="#333" d="M3 7h16v11H3zM1 2h4l1 3H2zm6 0h4l1 3H8zm6 0h5l1 3h-5z"/><circle fill="#5cc0d0" stroke="#333" cx="5" cy="14" r="4.500"/>',
    help: '<path class="ds" style="stroke-width:5" d="M6 6c0-5 9-5 9 0 0 3-4 3-4 7"/><path fill="none" stroke="#7ed2dd" stroke-width="2.500" d="M6 6c0-5 9-5 9 0 0 3-4 3-4 7M11 15v3"/>',
    clap: clapBase,
    clapEye: clapBase + '<ellipse class="ds" style="stroke-width:1.500" cx="10" cy="13" rx="6" ry="4"/><circle class="d" cx="10" cy="13" r="2"/>',
    ipr: clapBase + '<text x="10" y="17" font-size="9" font-weight="bold" text-anchor="middle" fill="#333">IPR</text>',
    clapGear: clapBase + gearAt(14, 14, 't'),
    clapLayers: clapBase + '<path class="t" stroke="#333" stroke-width=".6" d="M13 9l6 3-6 3-6-3zM7 15l6 3 6-3-1-1-5 2-5-2z"/>',
    ring: '<ellipse class="t" cx="10" cy="10" rx="9" ry="9.500"/><circle class="g" cx="11" cy="9" r="5"/><circle class="d" cx="11" cy="9" r="3"/><circle class="g" cx="12" cy="9" r="2.500"/>',
    lightGear: '<path class="gs" style="stroke-width:3" d="M10 10l8-9M7 6l6 6"/><path class="ts" stroke-dasharray="2 2" d="M1 8h5M1 17l4-4"/>' + gearAt(13, 15, 't'),
    pause: '<path class="g" d="M4 3h4v13H4zM12 3h4v13h-4z"/>',
    person: '<path fill="#fff" stroke="#111" d="M10 1c4 0 4 4 3 6 0 2-1 3-1 5l6 4v2H2v-2l6-4c0-2-1-3-1-5-1-2-1-6 3-6z"/>',
    modelKit: '<path class="g" d="M1 6l7-4 3 2v14l-6 1-4-3z"/><path class="ds" d="M1 6l5 2v11M6 8l5-3M1 11l5 2"/><path class="g" d="M9 1h8l2 3h-4v14h-3V4H9z"/>',
    human: '<circle class="g" cx="10" cy="3" r="2.500"/><path class="gs" d="M2 8h16M7 7h6v6H7zM8 13v6M12 13v6"/>',
    attrEd: '<path class="gs" d="M8 2h11v4H8zM8 14h11v4H8zM1 4h7M1 10h7M3 16h5"/><path class="g" d="M8 8h11v4H8z"/>',
    toolSet: '<circle class="g" cx="3" cy="3" r="2"/><circle class="g" cx="3" cy="10" r="2"/><circle class="g" cx="3" cy="17" r="2"/><path class="gs" d="M5 3h5M5 10h7M5 17h5"/><path class="g" d="M9 1h8l2 3h-3v14h-3V4H9z"/>',
    chanBox: '<path fill="#ccc" stroke="#333" stroke-width=".8" d="M10 9l9 4-9 5-9-5z"/><path fill="#ccc" stroke="#333" stroke-width=".8" d="M10 5l9 5-9 5-9-5z"/><path fill="#ccc" stroke="#333" stroke-width=".8" d="M10 1l9 5-9 5-9-5z"/><path class="ds" d="M6 5h8M6 7h8"/>',
    gear: gearAt(10, 10, 'g').replaceAll('r="3"', 'r="7"').replaceAll('r="2.200"', 'r="5"'),

    sphere: '<circle class="o" cx="10" cy="10" r="9"/><ellipse class="ds" cx="10" cy="10" rx="4.500" ry="9"/><path class="ds" d="M1 10c5 2 13 2 18 0M3 5c4 2 10 2 14 0M3 15c4 2 10 2 14 0"/>',
    cube: '<path class="o" d="M10 1l8 4v10l-8 4-8-4V5z"/>' + cubeLines + '<path class="ds" d="M2 10l8 4.500 8-4.500M6 7v10M14 7v10M6 3l8 5M14 3L6 8"/>',
    cylinder: '<path class="o" d="M2 4c0-4 16-4 16 0v12c0 4-16 4-16 0z"/><path class="ds" d="M2 4c0 4 16 4 16 0M2 10c0 4 16 4 16 0M7 7v12M13 7v12M5 2l10 4M15 2L5 6"/>',
    cone: '<path class="o" d="M10 1l7 15c0 4-14 4-14 0z"/><path class="ds" d="M10 1L8 19M10 1l3 18M6 10c2 1 6 1 8 0"/>',
    torus: '<ellipse class="o" cx="10" cy="10" rx="6" ry="10" transform="rotate(-25 10 10)"/><ellipse cx="9" cy="9" rx="2" ry="5.500" fill="#444" transform="rotate(-25 9 9)"/><path class="ds" d="M3 8l4 1M5 14l4-1M13 18l-2-5M17 12l-5 0M13 4l-3 2"/>',
    plane: '<path class="o" d="M10 1l8 9-8 9-8-9z"/><path class="ds" d="M6 5l8 10M14 5L6 15"/>',
    disc: '<ellipse class="o" cx="10" cy="10" rx="9" ry="6"/><path class="ds" d="M1 10h18M10 4v12M4 6l12 8M16 6L4 14"/>',
    platonic: '<path class="o" d="M10 1l8 5v9l-8 4-8-4V6z"/><path class="ds" d="M10 1L5 13h10zM5 13l-3-7M15 13l3-7M5 13l5 6 5-6"/><path class="g" d="M20 15v5h-5z"/>',
    star: '<path class="o" d="M9 0l2.500 7L19 10l-7.500 3L9 20l-2.500-7L0 10l6.500-3z"/><path class="g" d="M20 15v5h-5z"/>',
    type: '<path class="o" d="M2 1h16v5h-1l-2-3h-3v14l2 1v1H6v-1l2-1V3H5L3 6H2z"/>',
    svgIcon: '<path class="o" d="M1 1h18v18H1z"/><text x="10" y="13" font-size="9" font-weight="bold" text-anchor="middle" fill="#333">svg</text>',
    pivot: '<path class="ts" d="M10 0v6M5 14l-5 4M15 14l5 4"/><circle class="gs" cx="10" cy="12" r="6"/><circle class="g" cx="10" cy="12" r="2.500"/><path class="ts" d="M0 15v4h4M20 15v4h-4"/>',
    history: '<circle class="t" cx="6" cy="6" r="6"/><path class="ds" style="stroke-width:1.500" d="M6 2v4h3"/><path class="ts" d="M9 9h8M7 13h6M9 17h4"/><path class="gs" style="stroke-width:2" d="M14 13l5 6M19 13l-5 6"/>',
    freeze: '<path class="gs" d="M10 0v11M5 3l10 6M15 3L5 9M8 1l2 2 2-2M8 10l2-2 2 2"/><text x="10" y="18" font-size="7" text-anchor="middle" class="t">0,0,0</text>',
    combine: '<circle class="gs" cx="10" cy="10" r="9"/><path class="o" d="M10 4l6 3.500-6 3.500-6-3.500zM4 11l2-1 4 2.500 4-2.500 2 1-6 4.500z"/>',
    separate: '<path class="g" d="M4 1h7v7H4zM12 1h7v7h-7zM12 10h7v7h-7z"/><path class="o" d="M2 11h7v7H2z"/>',
    mirror: '<path class="o" d="M0 6l4-3 4 3v9l-4 3-4-3zM12 6l4-3 4 3v9l-4 3-4-3z"/><path class="ds" d="M0 6l4 3 4-3M4 9v9M12 6l4 3 4-3M16 9v9"/><path class="gs" stroke-dasharray="3 2" d="M10 0v20"/>',
    smooth: '<path class="o" d="M7 1h12v11H7z"/><path class="ds" d="M10 1v11M13 1v11M16 1v11M7 4h12M7 7h12M7 10h12"/><path class="g" d="M1 8h5v5H1zM1 14h5v5H1zM7 14h5v5H7z"/>',
    reduce: '<path class="o" d="M7 1h12v11H7z"/><path class="ds" d="M13 1v11M7 6h12"/><path class="g" d="M1 8h10v11H1z"/><path class="ds" d="M4 8v11M7 8v11M1 11h10M1 14h10"/>',
    remesh: '<path class="o" d="M2 2l4-2 4 2v12l-4 2-4-2z"/><path class="ds" d="M2 2l4 2 4-2M6 4v12"/><path class="g" d="M11 12l4-3 5 5-4 4-4 2-5-3z"/>',
    boolean: '<path class="g" d="M9 0l6 3-6 3-6-3zM4 8l6 3-6 3-4-3zM16 7l4 3-4 3-4-3zM16 14l4 3-4 3-4-3z"/><path class="os" d="M11 4l4 2-4 2"/><path class="o" d="M10 12l5 3-5 3-5-3z"/>',
    bevelA: '<path class="o" d="M10 0l6 3-6 4-6-4zM2 6l7 5v9l-7-4zM18 6l-7 5v9l7-4z"/><path class="g" d="M3 4l7 4 7-4 1 1-7 5v10H9V10L2 5z"/>',
    bevelB: '<path class="o" d="M9 1h11v11h-8V8H9z"/><path class="ds" d="M14 1v11M9 6h11"/><path class="g" d="M1 8h7v4h4v6H1z"/><path class="ds" d="M5 8v10M1 12h11"/>',
    bridge: '<circle class="os" cx="10" cy="10" r="8"/><circle class="o" cx="10" cy="10" r="4"/><path class="os" d="M10 1v18M1 10h18M4 4l12 12M16 4L4 16"/><path class="ds" d="M10 6v8M6 10h8"/>',
    wheel: '<path class="g" d="M9 1h10v11h-6V8H9z"/><path class="o" d="M1 8h11v11H1z"/><path class="ds" d="M1 8l11 11M12 8l7-7"/>',
    fill: '<path class="o" d="M4 5l5 3-4 3-5-3zM0 9l5 3 4-3v3l-4 3-5-4z"/><path class="g" d="M11 4l4 3-4 3-4-3zM16 8l4 3-4 3-4-3zM11 12l4 3-4 3-4-3z"/>',
    multi: '<path class="gs" d="M2 2h16v16H2zM2 2l6 6M18 2l-6 6M2 18l6-6M18 18l-6-6"/><path class="os" d="M8 8h4v4H8z"/><path class="g" d="M0 0h4v4H0zM16 0h4v4h-4zM0 16h4v4H0zM16 16h4v4h-4z"/>',
    target: '<circle class="o" cx="13" cy="7" r="7"/><path class="ds" d="M6 7h14M13 0v14M9 2v10M17 2v10M7 4h12M7 10h12"/><path class="g" d="M0 9h10v11H0z"/><path class="ds" d="M3 9v11M7 9v11M0 13h10M0 16h10"/>',
    penCut: '<path class="os" d="M2 19V7l12-5"/><path class="o" d="M0 5h4v4H0zM12 0h4v4h-4zM0 16h4v4H0z"/><path class="g" d="M19 2l1 2-8 13-6 3 3-6z"/>',
    loopCut: '<path class="gs" d="M2 2h16v16H2z" stroke-dasharray="3 1"/><path class="os" d="M10 2v16"/><path class="o" d="M8 0h4v4H8zM8 16h4v4H8z"/><path class="g" d="M0 0h4v4H0zM16 0h4v4h-4zM0 16h4v4H0zM16 16h4v4h-4z"/>',
    quad: '<path class="gs" d="M2 3h7v7H2z"/><path class="g" d="M0 1h4v4H0zM7 1h4v4H7zM0 8h4v4H0zM17 4l3 3-8 10-4 2 1-5z"/><path class="o" d="M0 16h4v4H0zM7 16h3v3H7z"/>',
    uvPlane: '<path class="e" d="M0 1h17v18H0z"/>' + chk(12, 12),
    uvCyl: '<path class="e" d="M1 2c5 3 11 3 16 0v14c-5 4-14 4-16 0z"/>' + chk(12, 12),
    uvSph: '<path class="e" d="M3 3c5 2 9 2 13 0 4 8 2 12-2 16H6C0 15 0 8 3 3z"/>' + chk(12, 12),
    uvCube: '<path class="e" d="M9 0l8 5-8 5-8-5zM0 7l8 5v8l-8-5zM18 7l-8 5v8l8-5z"/>' + chk(12, 12),
    uvCam: '<path class="es" style="stroke-width:2" d="M2 19c-2-7 3-9 7-8 5 0 5-8 8-10M7 19c0-4 2-4 5-4 5-1 6-7 8-10"/>' + chk(12, 12),
    uvEd: '<path class="g" d="M1 1h18v3H1z"/><path class="e" d="M1 5h18v14H1z"/>' + chk(6, 8),
    unfold: '<path class="es" style="stroke-width:3" d="M2 7l16 10M18 7L2 17"/><path class="e" d="M0 5h6l-6 5zM20 5h-6l6 5zM0 19h6l-6-5zM20 19h-6l6-5z"/>' + chk(7, 3),
    sew: '<path class="es" d="M3 2c8-2 12 0 10 6s-12 8-8 12"/><path class="g" d="M1 1l14 15 2 3-3-2L1 4zM19 0l1 2L3 20l-1-1z"/>',

    arrow: '<path class="g" d="M6 1l9 11-5 1 3 6-2 1-3-6-3 3z"/>',
    lasso: '<path class="ts" stroke-dasharray="3 2" d="M12 1C6 0 1 8 2 13s8 5 8 0M12 1c4 1 4 5 2 7"/><path class="g" d="M9 5l8 10-4 .5 2 4-2 .5-2-4-2 3z"/>',
    paint: '<path class="ts" stroke-dasharray="3 2" d="M8 6C3 4 0 7 2 12s8 9 12 5c2-3 0-5-2-6"/><path class="g" d="M19 0l1 2-8 9-3-2zM8 9l3 3-2 4-5-1z"/>',
    move: '<path class="g" stroke="#333" stroke-width=".7" d="M5 6h10v9H5z"/><path class="t" stroke="#333" stroke-width=".5" d="M10 0l3 4H7zM10 20l3-4H7zM0 10.500L3 7v7zM20 10.500L17 7v7z"/>',
    rotate: '<path class="ts" d="M17 15A9 9 0 1 1 18 9" style="stroke-width:1.500"/><path class="t" d="M14 9h6l-2 4z"/><path class="g" d="M10 5l5 5-5 5-5-5z"/>',
    scale: '<path class="ts" stroke-dasharray="3 1.500" style="stroke-width:1" d="M3 2h15v16H3z"/><path class="ts" style="stroke-width:1" d="M9 9h4v4"/><path class="g" d="M3 11h6v8H3z"/>',
    jointTool: '<circle class="v" cx="14" cy="4" r="1.800"/><circle class="v" cx="5" cy="12" r="1.800"/><path class="v" d="M12 5l1 2-6 4zM6 14l3-1 5 7z"/>',
    laySingle: '<path class="g" d="M1 1h18v18H1z"/><path class="ds" d="M3 3h14v14H3z"/><path class="d" d="M10 5l3 2-3 2-3-2zM7 8l3 2-3 2-3-2zM13 8l3 2-3 2-3-2zM10 11l3 2-3 2-3-2z"/>',
    layFour: '<path class="gs" style="stroke-width:.8" d="M1 1h8v8H1zM1 11h8v8H1zM11 11h8v8h-8zM5 3v4M3 5h4M5 13v4M3 15h4M15 13v4M13 15h4"/><path class="g" d="M11 1h8v8h-8z"/><path class="d" d="M15 3l3 2-3 2-3-2z"/>',
    layTwo: '<path class="gs" style="stroke-width:.8" d="M1 1h8v18H1zM5 8v4M3 10h4"/><path class="g" d="M11 1h8v18h-8z"/><path class="d" d="M15 8l3 2-3 2-3-2z"/>',
    layOut: '<path class="ds" style="stroke-width:2" d="M1 1h18v18H1z"/><path class="gs" style="stroke-width:.8" d="M1 1h18v18H1zM5 5v13M5 8h4M5 12h4M5 16h4"/><path class="g" stroke="#333" stroke-width=".6" d="M4 3h3v3H4zM7 4h7v1.500H7zM8 7h3v3H8zM11 8h6v1.500h-6zM8 11h3v3H8zM11 12h4v1.500h-4zM8 15h3v3H8zM11 16h5v1.500h-5z"/>',

    frame: '<path fill="none" stroke="#777" stroke-width="1.500" stroke-dasharray="3 2" d="M4 1h12v18H4z"/>',
    cam: '<path class="g" d="M1 5h11v10H1zM13 10l5-5v10z"/>',
    jointItem: '<path class="v" stroke="#333" stroke-width=".7" d="M16 0l2 3-7 7-4-2zM5 11l4-1 6 8-2 2z"/><circle class="v" stroke="#333" stroke-width=".7" cx="6" cy="10" r="3"/>',
    set: '<circle class="gs" cx="10" cy="10" r="9"/><path class="t" d="M9 4h6v9H9z"/><circle class="g" cx="8" cy="12" r="3.500"/>',

    vcam: '<path class="g" d="M1 6h11v9H1zM13 10l6-5v10z"/>',
    camLock: camBase + '<path class="t" d="M2 10h8v8H2z"/><path class="ts" d="M4 10V7h4v3"/>',
    camGear: camBase + gearAt(8, 13, 't'),
    bookmark: '<path class="g" d="M6 2h8v16l-4-4-4 4z"/>',
    imgPlane: '<path class="t" d="M9 8l7-6v14l-7-2z"/><path class="g" d="M1 17l6-4h12l-5 5z"/>',
    panZoom: '<path class="gs" d="M7 1v10M2 7h10M5 3l2-2 2 2M4 5L2 7l2 2"/><circle class="ts" cx="14" cy="13" r="4"/><path class="ts" d="M11 16l-3 3"/>',
    pencil: '<path class="g" d="M18 1l1 3-8 11-4-3zM7 13l3 3-3 2-6 1c2-1 3-4 6-6z"/>',
    grid: '<path class="ds" style="stroke:#333" d="M2 2h16v16H2z"/><path class="gs" style="stroke:#ddd" d="M3 3h14v14H3zM8 3v14M12 3v14M3 8h14M3 12h14"/>',
    film: '<path class="gs" d="M1 3h18v14H1zM4 6h12v8H4z"/><path class="gs" stroke-dasharray="1 2" d="M2 5h16M2 16h16"/>',
    gate: '<path class="gs" d="M2 2h16v16H2z"/><circle class="t" cx="10" cy="10" r="4"/>',
    mask: '<path class="ds" d="M1 1h18v18H1z"/><circle cx="10" cy="10" r="5" fill="#555"/>',
    fieldChart: '<path class="gs" d="M2 2h16v16H2z"/><path class="ts" stroke-dasharray="2 1" d="M10 2v16M2 10h16"/>',
    safeA: '<path class="gs" d="M2 2h16v16H2z"/><path class="t" d="M4 15l4-8 4 8z"/><circle class="t" cx="13" cy="7" r="3"/>',
    safeT: '<path class="gs" d="M2 2h16v16H2z"/><path class="t" d="M5 5h10v3h-1l-1-1h-2v7h2v1H7v-1h2V7H7L6 8H5z"/>',
    wire: '<path class="gs" d="M10 1l8 4v10l-8 4-8-4V5zM10 9v10M10 9L2 5M10 9l8-4M10 1v8M2 15l8-5 8 5"/>',
    shaded: '<path fill="#7ed2ef" stroke="#333" stroke-width=".7" d="M10 1l8 4v10l-8 4-8-4V5z"/>' + cubeLines,
    halfShade: '<circle class="gs" cx="10" cy="10" r="8"/><path class="g" d="M10 2a8 8 0 0 0 0 16z"/><path class="gs" stroke-dasharray="2 2" d="M14 5v10"/>',
    texCube: '<path class="gs" d="M10 1l8 4v10l-8 4-8-4V5z"/><path class="t" d="M10 1l8 4-8 5-8-5zM10 12l4-2v8l-4 1z"/>' + cubeLines,
    checker: '<circle class="g" cx="10" cy="10" r="8"/><path class="ds" style="stroke-width:2" stroke-dasharray="2 2" d="M3 6h14M2 10h16M3 14h14"/><circle class="gs" cx="10" cy="10" r="8"/>',
    bulb: '<circle class="g" cx="10" cy="8" r="4"/><path class="g" d="M8 12h4v5H8z"/><path class="gs" d="M1 8h2M17 8h2M3 2l2 2M17 2l-2 2M10 0v2"/>',
    shadow: '<circle class="t" cx="13" cy="8" r="6"/><path class="gs" d="M2 10c0 6 5 9 9 8M5 12c1 3 3 4 5 4"/>',
    ao: '<circle class="g" cx="10" cy="6" r="5"/><path class="ts" d="M4 12l6 6 6-6M6 10l4 4 4-4"/>',
    blur: '<circle cx="6" cy="13" r="5" fill="#777"/><circle cx="9" cy="10" r="5" fill="#999"/><circle class="g" cx="13" cy="6" r="5"/>',
    half: '<path class="ts" d="M9 2a8 8 0 0 0 0 16" style="stroke-width:2.500"/><path class="gs" stroke-dasharray="4 2" d="M11 2a8 8 0 0 1 0 16" style="stroke-width:2.500"/>',
    greyBox: '<path class="ds" d="M1 1h18v18H1z"/><path fill="#3c5558" d="M4 4h8v8H4zM9 8h8v8H9z"/>',
    isoSel: '<path class="ts" stroke-dasharray="2 2" d="M2 2h11v11H2z"/>' + pointer(10, 6),
    xray1: '<path class="gs" d="M2 7h10v10H2zM7 2h11v11H7z"/><path class="g" d="M7 7h5v6H7z"/>',
    xray2: '<path class="gs" d="M8 2h10v10H8z"/><path class="g" d="M2 7h10v11H2z"/>',
    xray3: '<path class="gs" d="M2 2h16v16H2zM5 5l9 10"/>',
    aperture: '<circle class="gs" cx="10" cy="10" r="6" style="stroke-width:5" stroke-dasharray="5 1.300"/>',
    gamma: '<path class="g" d="M9 2h8v16H9a8 8 0 0 0 0-16z"/><path class="gs" d="M7 5a7 7 0 0 0 0 10"/>',
    on: '<circle class="t" stroke="#333" cx="10" cy="10" r="9"/><text x="10" y="13" font-size="8" font-weight="bold" text-anchor="middle" fill="#222">ON</text>',

    manip: '<path class="gs" d="M10 6v6l-6 4M10 12l6 4"/><circle cx="10" cy="4" r="4" fill="#55b055"/><path fill="#3d7fd8" d="M0 13l7 6H0z"/><path fill="#d84545" d="M20 13l-7 6h7z"/>',
    speed: '<path class="ts" style="stroke-width:6" d="M5 17a7 7 0 1 1 10 0"/><path class="g" d="M9 10h10v4H9z"/>',
    hyper: '<path class="gs" d="M2 1v17h18"/><path class="ts" style="stroke-width:2" d="M5 15L17 3"/><path class="t" d="M12 1h7v7z"/>',
    layUp: '<path class="g" d="M0 10l9-6 4 3v6l-4 3z"/><path class="t" d="M15 3l5 5h-3v8h-4V8h-3z"/>',
    layDown: '<path class="g" d="M0 10l9-6 4 3v6l-4 3z"/><path class="t" d="M15 17l5-5h-3V4h-4v8h-3z"/>',
    layAdd: '<path class="g" d="M0 11l10-6 8 6-8 6z"/><path class="t" d="M14 1h3v3h3v4h-3v3h-3V8h-3V4h3z"/>',
    laySel: '<path class="g" d="M0 12l10-6 8 6-8 6z"/><circle class="t" cx="14" cy="5" r="5"/>',

    toStart: '<path class="g" d="M0 3h2v14H0zM11 4v12l-8-6zM20 4v12l-8-6z"/>',
    stepBack: '<path class="g" d="M2 3h2v14H2zM17 3v14L5 10z"/>',
    keyBack: '<path class="o" d="M2 2h4v15H2z"/><path class="g" d="M18 3v14L7 10z"/>',
    playBack: '<path class="g" d="M18 2v16L1 10z"/>',
    play: '<path class="g" d="M2 2v16l17-8z"/>',
    keyFwd: '<path class="o" d="M14 2h4v15h-4z"/><path class="g" d="M2 3v14l11-7z"/>',
    stepFwd: '<path class="g" d="M16 3h2v14h-2zM3 3v14l12-7z"/>',
    toEnd: '<path class="g" d="M18 3h2v14h-2zM9 4v12l8-6zM0 4v12l8-6z"/>',
    triOut: '<path fill="none" stroke="#aaa" stroke-width="2" d="M3 4h14l-7 12z"/>',
    loop: '<path class="gs" style="stroke-width:2" d="M14 5H4c-4 1-4 8 0 9M6 15h10c4-1 4-8 0-9"/><path class="g" d="M12 1l6 4-6 4zM8 11v8l-6-4z"/>',
    cache: '<path class="os" style="stroke-width:3" stroke-dasharray="3 1" d="M1 5h18M1 16h18"/><path fill="#ddd" stroke="#a55a22" d="M2 7h16v7H2zM6 7v7M11 7v7"/><path fill="#ddd" d="M12 0l7 5-7 4z"/>',
    autoKey: '<path class="gs" d="M2 9c1-8 12-10 16-3M18 11c-1 8-12 10-16 3M18 2v5h-5M2 18v-5h5"/><path class="o" d="M9 6h2v8H9z"/>',
    prefs: gearAt(6, 6, 'g') + '<circle class="o" cx="15" cy="5" r="2"/><path class="os" style="stroke-width:2.500" d="M7 11l3-3 4 1-3 6 4 1v4M11 14l-3 4H4M14 10l4 1"/>',
    script: '<path class="g" d="M1 1h18v3H1zM1 5h18v14H1z"/><text x="10" y="15" font-size="10" font-weight="bold" text-anchor="middle" fill="#333">{;}</text>',

    windows: '<path class="w" d="M1 4l8-1v7H1zM10 3l9-2v9h-9zM1 11h8v7l-8-1zM10 11h9v8l-9-1z"/>',
    magnifier: '<circle cx="12" cy="7" r="5.500" fill="none" stroke="#222" stroke-width="1.500"/><path stroke="#222" stroke-width="1.500" d="M8 11l-6 7"/>',
    cortana: '<circle class="ws" style="stroke-width:2.500" cx="10" cy="10" r="8"/>',
    taskView: '<path class="ws" d="M2 1v3h10V1M2 7h10v6H2zM2 19v-3h10v3M17 1v3M17 7v4M17 13v6"/>',
    edge: ball('#1b7fd1', '<path fill="#3cc9a0" d="M1 9C2 0 17-1 19 9c0 4-6 4-7 2 1-6-7-6-11-2z"/><path fill="#0b4d9b" d="M6 9c-1 6 4 9 11 7-6 6-15 2-15-5 1-1 2-2 4-2z"/>'),
    explorer: '<path fill="#e8a820" d="M1 3h6l2 2h10v12H1z"/><path fill="#fcd462" d="M1 7h18v10H1z"/><path fill="#3a8fe0" d="M4 18v-7h12v7h-3v-3H7v3z"/>',
    mail: '<path fill="#1267b4" d="M1 7l9-6 9 6v12H1z"/><path fill="#fff" d="M3 7h14l-7 6z"/><path fill="#2b9be8" d="M1 8l9 7 9-7v11H1z"/>',
    store: '<path fill="#2a9ad8" d="M5 1h10v6h-2V3H7v4H5z"/><path fill="#f4f4f4" d="M1 5h18v12l-2 2H3l-2-2z"/><path fill="#e8502e" d="M5 8h4v4H5z"/><path fill="#7fba00" d="M11 8h4v4h-4z"/><path fill="#00a4ef" d="M5 13h4v4H5z"/><path fill="#ffb900" d="M11 13h4v4h-4z"/>',
    nuke: ball('#f2b53a', '<circle cx="10" cy="10" r="8" fill="none" stroke="#222"/><path fill="#222" d="M10 10L3 6a9 9 0 0 1 5-3zM10 10l7-3a8 8 0 0 1-1 7zM10 10l-1 7a8 8 0 0 1-5-4z"/>'),
    zbrush: '<path fill="#e6e6e6" d="M1 1h18v18H1z"/><path fill="none" stroke="#222" stroke-width="2" d="M12 4l-2 5 4 4v4M10 9l-4 8M5 7l6-1 4 2"/>',
    idea: '<path fill="#e8416c" d="M1 2l9 1-3 14-6-5z"/><path fill="#2b7df0" d="M12 1l7 6-2 10-7 2z"/><path fill="#111" d="M4 4h12v12H4z"/><text x="10" y="12" font-size="7" font-weight="bold" text-anchor="middle" fill="#fff">IJ</text>',
    ae: letters('#1f0740', '#c99bff', 'Ae', '#a884e0'),
    xd: letters('#470137', '#ff61f6', 'Xd', '#e05ab8'),
    tvp: '<path fill="#1a8aa8" d="M0 5h20v10H0z"/><text x="10" y="14" font-size="9" font-weight="bold" text-anchor="middle" fill="#fff">TVP</text>',
    cinema: '<path fill="#111" d="M1 1h18v18H1z"/><path fill="none" stroke="#fff" stroke-width="2.500" d="M15 6a6 6 0 1 0 0 8"/>',
    marmo: '<path fill="none" stroke="#e04a1e" stroke-width="3.500" d="M5 6a7 7 0 1 0 9-1"/><circle cx="8" cy="5" r="2.500" fill="#e04a1e"/>',
    substance: '<path fill="#f0441e" d="M3 4h14v13H3z"/><path stroke="#f0441e" stroke-width="2" d="M0 11h20M10 1v19"/><text x="10" y="14" font-size="10" font-weight="bold" text-anchor="middle" fill="#fff">S</text>',
    affinity: ball('#f4f4f4', '<path fill="#2f5cc8" d="M5 7h10v7H5z"/><path fill="#3cb36a" d="M10 3l4 7H6z"/>'),
    firebase: '<path fill="#fff" d="M0 0h20v20H0z"/><path fill="#ffa000" d="M4 15L8 3l3 5 2-3 4 10-7 4z"/><path fill="#ffca28" d="M4 15l6-6 7 6-7 4z"/>',
    node: '<path fill="#54953f" d="M10 0l8 5v10l-8 5-8-5V5z"/><path fill="#3a7a2c" d="M10 0l8 5v10l-8 5z"/>',
    inventor: '<path fill="#fff6ea" d="M0 0h20v20H0z"/><path fill="#d9892b" d="M5 2h10v3l-3 1v6l3 1v2H5v-2l3-1V6L5 5z"/>',
    photo: '<path fill="#8fb0a8" d="M0 1h20v18H0z"/><path fill="#4d5a2c" d="M0 10l8-4 12 5v8H0z"/><path fill="#8f7b3a" d="M0 14l10-2 10 4v3H0z"/>',
    chrome: ball('#f0c419', '<path fill="#db4437" d="M2 5a9 9 0 0 1 16 1h-8L6 13z"/><path fill="#0f9d58" d="M2 5l5 7 3 2-1 5A9 9 0 0 1 2 5z"/><circle cx="10" cy="10" r="4" fill="#4285f4" stroke="#fff"/><circle cx="14" cy="14" r="5" fill="#54433a"/>'),
    vscode: '<path fill="none" stroke="#2196e3" stroke-width="3" d="M15 2L2 13M15 18L2 7"/><path fill="#1b78c4" d="M14 0l5 2v16l-5 2z"/>',
    filmora: '<path fill="#2d3d47" d="M1 1h18v18H1z"/><path fill="#3fd5bd" d="M7 3l7 7-7 7v-5l3-2-3-2z"/>',
    sw: '<path fill="#b81820" d="M2 3l9-3 8 3v15H2z"/><text x="10" y="11" font-size="9" font-weight="bold" text-anchor="middle" fill="#fff">SW</text><text x="11" y="17" font-size="5" text-anchor="middle" fill="#fff">2021</text>',
    arrowApp: '<path fill="#2b2624" d="M1 1h18v18H1z"/><path fill="#ee6c2b" d="M16 2v4l-6 5 6 5v2H6V9z"/>',
    wacom: ball('#fff', '<text x="10" y="15" font-size="14" text-anchor="middle" fill="#1a86c8">w</text>'),
    camtasia: '<text x="10" y="16" font-size="17" font-weight="bold" text-anchor="middle" fill="#5dbb2f">S</text>',
    pcApp: '<path fill="#0b7fd0" d="M0 0h20v20H0z"/><path class="ws" d="M4 5h12v8H4zM7 16h6"/><circle class="w" cx="14" cy="6" r="2.500"/>',
    sunApp: ball('#222', '<circle cx="10" cy="10" r="8.500" fill="none" stroke="#e8a640"/><circle cx="10" cy="10" r="3.500" fill="#f0ad45"/><circle cx="10" cy="10" r="5" fill="none" stroke="#f0ad45" stroke-width="2" stroke-dasharray="1.500 1.500"/>'),
    flame: '<path fill="#f7941d" d="M0 0h20v20H0z"/><path class="w" d="M8 2c3 5 7 7 6 12l-3 4-1-5-3 5c-5-5 0-9 1-16z"/>',
    wApp: '<path fill="#2b2b2b" d="M1 1h18v18H1z"/><text x="10" y="14" font-size="12" font-weight="bold" text-anchor="middle" fill="#fff">W,</text>',
    houdini: '<path fill="#ff6b1e" d="M0 0h20v20H0z"/><path fill="none" stroke="#222" stroke-width="3" d="M1 4c10-4 17 3 16 8s-9 7-11 2 4-7 6-3"/>',
    hApp: ball('#222', '<circle cx="10" cy="10" r="8.500" fill="none" stroke="#f0b54a"/><path fill="none" stroke="#f0b54a" stroke-width="2" d="M7 5v10M13 5v10M7 10h6"/>'),
    ps: letters('#001d34', '#31a8ff', 'Ps', '#2fa3e0'),
    c4d: ball('#bcc3e8', '<circle cx="9" cy="10" r="7" fill="#22263f"/><circle cx="12" cy="8" r="4" fill="#dfe4f8"/><circle cx="11" cy="9" r="3" fill="#3b4a8c"/>'),
    movies: '<path fill="#2f8fe0" d="M0 4l18-4v5L3 8zM2 8h18v12H2z"/><path class="w" d="M8 10l7 4-7 4z"/>',
    caret: '<path class="ws" d="M3 13l7-7 7 7"/>',
    battery: '<path class="ws" d="M6 6h12v9H6zM3 2v4M1 6h5v3H3v8"/><path class="w" d="M8 8h8v5H8z"/>',
    wifi: '<path class="ws" d="M2 18C2 9 9 2 18 2M6 18C6 12 12 6 18 6M10 18c0-4 4-8 8-8M14 18c0-2 2-4 4-4"/>',
    pen: '<path class="ws" d="M2 17c-3-5 5-6 4-1s-3 2-1-1L14 2l3 2-9 12M12 8h7M13 12c4-2 6 1 2 2"/>',
    note: '<path class="w" d="M1 2h18v12h-5l-4 5v-5H1z"/><path stroke="#333" d="M4 5h12M4 8h12M4 11h8"/>'
};

function svg(name) {
    return `<svg viewBox="0 0 20 20">${icons[name] || ''}</svg>`;
}

document.querySelectorAll('[data-icon]').forEach(function(el) {
    el.innerHTML = svg(el.dataset.icon);
});

// "|" separator, ">" collapsed group, "v" small arrow, "*" active, "+" running
document.querySelectorAll('[data-tools]').forEach(function(el) {
    el.innerHTML = el.dataset.tools.split(' ').map(function(t) {
        if (t === '|') return '<i class="sep"></i>';
        if (t === '>') return '<i class="more"></i>';
        if (t === 'v') return '<i class="mini-down"></i>';
        let name = t.replace(/[*+]/, '');
        let state = t.endsWith('*') ? 'on' : t.endsWith('+') ? 'run' : '';
        return `<button type="button" class="${state}" aria-label="${name}">${svg(name)}</button>`;
    }).join('');
});

// channel box
const channels = [
    ['Translate X', '0'], ['Translate Y', '0'], ['Translate Z', '0'],
    ['Rotate X', '0'], ['Rotate Y', '0'], ['Rotate Z', '0'],
    ['Scale X', '1'], ['Scale Y', '1'], ['Scale Z', '1'],
    ['Visibility', 'on', 'keyable-off'], ['Radius', '0.612', 'slider']
];
document.getElementById('channels').innerHTML = channels.map(function(c) {
    return `<label>${c[0]}<input type="text" class="${c[2] || ''}" value="${c[1]}"></label>`;
}).join('');

// time slider
let ticks = '<div>1</div>';
for (let f = 2; f <= 120; f += 2) {
    ticks += `<div>${f}</div>`;
}
document.getElementById('track').innerHTML = ticks;

// perspective grid: x at the top and bottom edge, y at the left and right edge
let lines = '';
for (let i = 0; i < 16; i++) {
    lines += `<line class="${i === 4 ? 'main-axis' : ''}" x1="${367 + 207.6 * i}" y1="193" x2="${357 + 223.4 * i}" y2="1975"/>`;
}
const rows = [[330, 145], [531, 346], [735, 549], [943, 757], [1156, 968], [1373, 1182], [1594, 1400], [1820, 1621], [2051, 1848]];
rows.forEach(function(r, i) {
    lines += `<line class="${i === 3 ? 'main-axis' : ''}" x1="318" y1="${r[0]}" x2="3553" y2="${r[1]}"/>`;
});
document.getElementById('grid').innerHTML = lines;
```
